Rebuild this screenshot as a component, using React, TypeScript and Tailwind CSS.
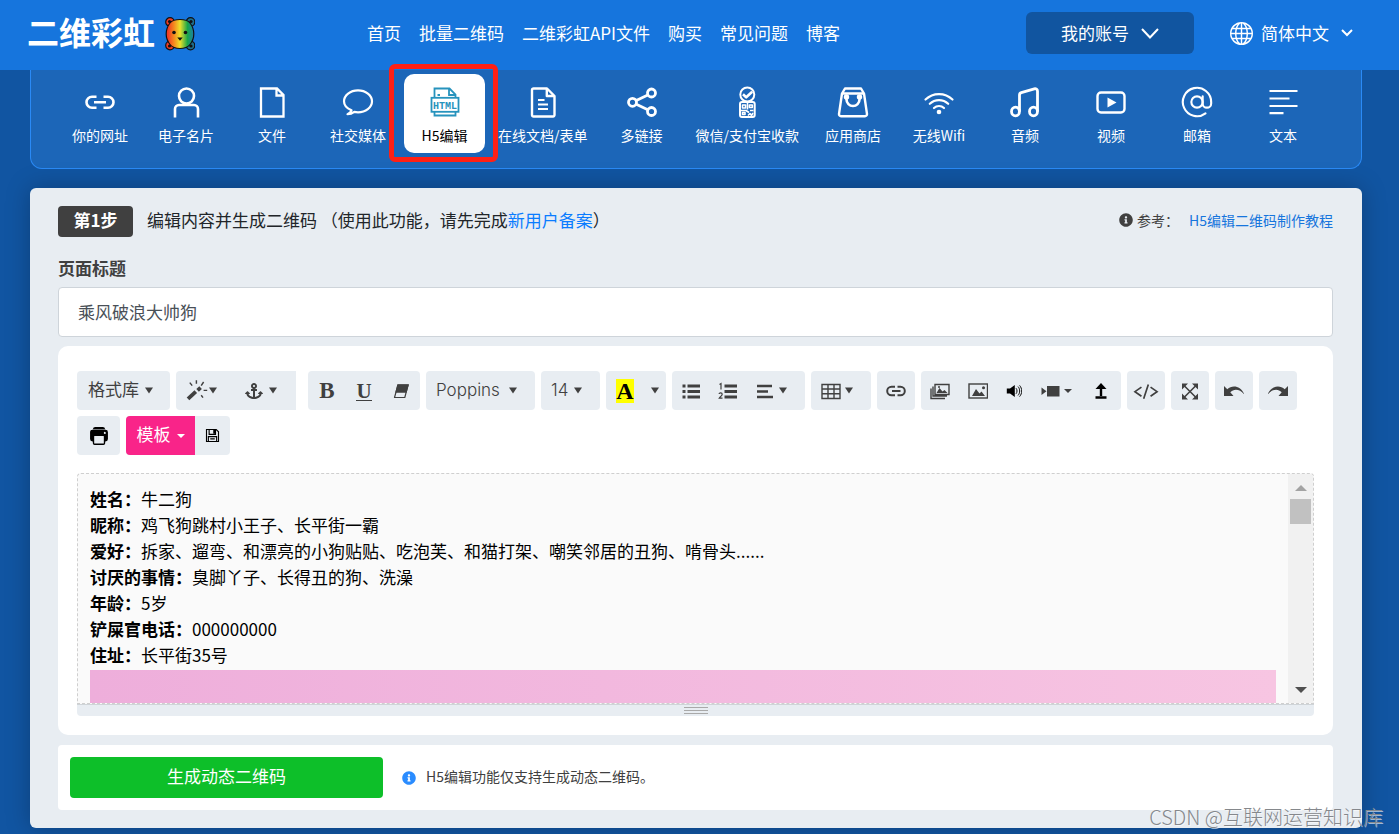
import type { ReactNode } from "react";
import { AtSign } from "lucide-react";
import { BsGlobe } from "react-icons/bs";
import { FaAnchor, FaInfoCircle } from "react-icons/fa";
import { IoPrint } from "react-icons/io5";

// ── Tab icons, 30×30 grid ────────────────────────────────────────────────────

function Line({ children, w = 2 }: { children: ReactNode; w?: number }) {
  return (
    <svg viewBox="0 0 30 30" className="h-[30px] w-[30px] overflow-visible" fill="none" stroke="currentColor" strokeWidth={w} strokeLinejoin="round">
      {children}
    </svg>
  );
}

const TABS: { label: string; icon: ReactNode; active?: boolean }[] = [
  {
    label: "你的网址",
    icon: (
      <Line w={2.6}>
        <path d="M11.5 9.8H7a5.5 5.5 0 0 0 0 11h4.5M18.5 9.8H23a5.5 5.5 0 0 1 0 11h-4.5M9 15.3h12" />
      </Line>
    ),
  },
  {
    label: "电子名片",
    icon: (
      <Line w={2.6}>
        <circle cx="15.5" cy="9" r="7.5" />
        <path d="M4 30.5v-8.5a4 4 0 0 1 4-4h15a4 4 0 0 1 4 4v8.5" />
      </Line>
    ),
  },
  {
    label: "文件",
    icon: (
      <Line w={2.3}>
        <path d="M4 1.5h16l6.500 6.5v21.5H4zM19.500 1.500v7h7" strokeLinejoin="miter" />
      </Line>
    ),
  },
  {
    label: "社交媒体",
    icon: (
      <Line w={2.2}>
        <path d="M8.500 23.300C4 21.500 1 18.300 1 14.300 1 8.200 7.300 3.300 15 3.300s14 4.900 14 11-6.300 11-14 11c-1.300 0-2.500-.1-3.700-.4-2 1.500-4.400 2.300-6.800 2.300 2-.9 3.500-2.300 4-3.900z" />
      </Line>
    ),
  },
  {
    label: "H5编辑",
    active: true,
    icon: (
      <svg viewBox="0 0 30 30" className="h-[30px] w-[30px] text-[#2793bd]" fill="none" stroke="currentColor" strokeWidth="1.800">
        <path d="M4.500 10.500V1.500h15l6 6v3M19 1.500V8h6.500M4.500 25v3.500h21V25M7.500 8h2.500" />
        <rect x="1.500" y="10.800" width="27" height="14" />
        <text x="15" y="21.500" textAnchor="middle" fill="currentColor" stroke="none" className="font-['Liberation_Mono'] text-[10px] font-bold">
          HTML
        </text>
      </svg>
    ),
  },
  {
    label: "在线文档/表单",
    icon: (
      <Line w={2.400}>
        <path d="M5.500 1.500h13.500l7.500 7.500v19a1.500 1.500 0 0 1-1.500 1.500H5.500A1.500 1.500 0 0 1 4 28V3a1.500 1.500 0 0 1 1.500-1.500zM18.800 2v7h7.200" />
        <path d="M10 13h6.500M10 17.500h10M10 22h10" strokeWidth="2" />
      </Line>
    ),
  },
  {
    label: "多链接",
    icon: (
      <Line w={2.800}>
        <circle cx="24.500" cy="6" r="4" />
        <circle cx="5.500" cy="15.300" r="4" />
        <circle cx="24.500" cy="24.500" r="4" />
        <path d="M9.300 13.500l11.500-5.600M9.300 17.200l11.500 5.500" />
      </Line>
    ),
  },
  {
    label: "微信/支付宝收款",
    icon: (
      <Line w={2}>
        <circle cx="15.300" cy="7.500" r="7" />
        <path d="M11 7.300l3.200 3 6-5.500" strokeWidth="2.600" />
        <rect x="8" y="15" width="14.700" height="15" rx="2" />
        <path d="M10.500 18h3v3h-3zM17.500 18h2.800v2.500h-2.800zM10.500 25.500h2.500v2h-2.500zM15.500 16v6.500M9 23.500h5l3 2M18 23.500h3.500M16 28.500l2-2 1.500 2 1.500-2.500" strokeWidth="1.600" />
      </Line>
    ),
  },
  {
    label: "应用商店",
    icon: (
      <Line w={2.400}>
        <path d="M4 6.500L7 1.500h16l3 5 3 20.500a2 2 0 0 1-2 2.200H3A2 2 0 0 1 1 27zM5 6.500h20" />
        <path d="M8.500 10.500v2a6.500 6.500 0 0 0 13 0v-2" strokeWidth="2.600" />
        <circle cx="8.500" cy="10" r="1.500" fill="currentColor" />
        <circle cx="21.500" cy="10" r="1.500" fill="currentColor" />
      </Line>
    ),
  },
  {
    label: "无线Wifi",
    icon: (
      <Line w={2.200}>
        <path d="M1.500 12.500a19.500 19.500 0 0 1 27 0M5.800 16.800a13.300 13.300 0 0 1 18.400 0M10 21a7.300 7.300 0 0 1 10 0" strokeLinecap="round" />
        <circle cx="15" cy="25" r="2.300" fill="currentColor" stroke="none" />
      </Line>
    ),
  },
  {
    label: "音频",
    icon: (
      <Line w={2.800}>
        <path d="M9.500 24.500V8a2.500 2.500 0 0 1 1.800-2.400l13-3.800a2.500 2.500 0 0 1 3.200 2.400v20.300" />
        <ellipse cx="5.500" cy="24.500" rx="4" ry="4.300" />
        <ellipse cx="23.500" cy="24.500" rx="4" ry="4.300" />
      </Line>
    ),
  },
  {
    label: "视频",
    icon: (
      <Line w={2.400}>
        <rect x="1.500" y="5.500" width="27" height="20" rx="3.500" />
        <path d="M11.500 10.500v10l9-5z" fill="currentColor" stroke="none" />
      </Line>
    ),
  },
  { label: "邮箱", icon: <AtSign size={34} strokeWidth={1.5} className="-m-0.5" /> },
  {
    label: "文本",
    icon: (
      <Line w={2.200}>
        <path d="M1.500 4h28M1.500 11.500h20M1.500 19h28M1.500 26.200h14" />
      </Line>
    ),
  },
];

// ── Editor content ───────────────────────────────────────────────────────────

const PROFILE = [
  ["姓名：", "牛二狗"],
  ["昵称：", "鸡飞狗跳村小王子、长平街一霸"],
  ["爱好：", "拆家、遛弯、和漂亮的小狗贴贴、吃泡芙、和猫打架、嘲笑邻居的丑狗、啃骨头......"],
  ["讨厌的事情：", "臭脚丫子、长得丑的狗、洗澡"],
  ["年龄：", "5岁"],
  ["铲屎官电话：", "000000000"],
  ["住址：", "长平街35号"],
];

const NAV = ["首页", "批量二维码", "二维彩虹API文件", "购买", "常见问题", "博客"];

// ── Small pieces ─────────────────────────────────────────────────────────────

function Caret() {
  return (
    <svg viewBox="0 0 8 7" className="h-[7px] w-2 shrink-0" fill="currentColor">
      <path d="M0 .5h8L4 6.500z" />
    </svg>
  );
}

function FlatCaret() {
  return (
    <svg viewBox="0 0 8 4" className="h-1 w-2 shrink-0" fill="currentColor">
      <path d="M0 0h8L4 4z" />
    </svg>
  );
}

function Group({ children, className = "" }: { children: ReactNode; className?: string }) {
  return <div className={`flex h-[39px] overflow-hidden rounded bg-[#e8edf2] text-[#404040] ${className}`}>{children}</div>;
}

function Tool({ label, children, className = "w-[38px]" }: { label: string; children: ReactNode; className?: string }) {
  return (
    <button type="button" aria-label={label} className={`flex items-center justify-center ${className}`}>
      {children}
    </button>
  );
}

function Glyph({ children, className = "h-5 w-5" }: { children: ReactNode; className?: string }) {
  return (
    <svg viewBox="0 0 20 20" className={`shrink-0 ${className}`} fill="none" stroke="currentColor" strokeWidth="1.600">
      {children}
    </svg>
  );
}

function Bear() {
  return (
    <svg viewBox="0 0 30 34" className="h-[34px] w-[30px]" stroke="#111" strokeWidth="1.200">
      <defs>
        <linearGradient id="rainbow" x1="0" y1="0" x2="30" y2="0" gradientUnits="userSpaceOnUse">
          <stop offset=".1" stopColor="#ef3b24" />
          <stop offset=".3" stopColor="#f58a1f" />
          <stop offset=".5" stopColor="#ece02a" />
          <stop offset=".75" stopColor="#1aa64a" />
          <stop offset="1" stopColor="#1c75bc" />
        </linearGradient>
      </defs>
      <circle cx="5" cy="5" r="4.300" fill="#ef3b24" />
      <circle cx="25.500" cy="5" r="4.300" fill="#1d6f8f" />
      <circle cx="5" cy="28.500" r="4.300" fill="#ef3b24" />
      <circle cx="25.500" cy="28.500" r="4.300" fill="#1d6f8f" />
      <path d="M15 2.500c4 0 8 1 10 3.500s3.800 7 3.800 11-1.800 8-3.800 10.500-6 4-10 4-8-1.500-10-4S1.200 21 1.200 17 3 8.500 5 6s6-3.500 10-3.500z" fill="url(#rainbow)" />
      <g fill="#111" stroke="none">
        <circle cx="9" cy="15.500" r="1.800" />
        <circle cx="20.500" cy="15.500" r="1.800" />
        <path d="M12.300 20.500h5.400L15 23.800z" />
        <circle cx="4.500" cy="4.500" r="1.600" />
        <circle cx="26" cy="4.500" r="1.600" />
        <circle cx="4.500" cy="29" r="1.600" />
        <circle cx="26" cy="29" r="1.600" />
      </g>
    </svg>
  );
}

function Header() {
  return (
    <header className="flex h-[70px] items-center bg-[#1675dd] pl-[27px] pr-[46px] text-[17px] text-white">
      <a href="#" className="flex items-center gap-2.5 pb-0.5 text-[32px] font-bold leading-none">
        <span className="pb-1.5">二维彩虹</span>
        <Bear />
      </a>
      <nav className="ml-[172px] flex gap-[18px] pb-1">
        {NAV.map((n) => (
          <a key={n} href="#">
            {n}
          </a>
        ))}
      </nav>
      <div className="ml-auto flex items-center gap-9 pb-1">
        <button type="button" className="flex h-[42px] w-[168px] items-center justify-center gap-3 rounded-md bg-[#1155a0]">
          我的账号
          <svg viewBox="0 0 18 11" className="h-[11px] w-[18px]" fill="none" stroke="currentColor" strokeWidth="2">
            <path d="M1 1l8 8.500L17 1" />
          </svg>
        </button>
        <div className="flex items-center gap-2">
          <BsGlobe size={23} />
          <select aria-label="语言" className="mr-1 appearance-none bg-transparent text-[17px]">
            <option>简体中文</option>
          </select>
          <svg viewBox="0 0 12 8" className="h-2 w-3" fill="none" stroke="currentColor" strokeWidth="2">
            <path d="M1 1l5 5 5-5" />
          </svg>
        </div>
      </div>
    </header>
  );
}

function Tabs() {
  return (
    <nav className="flex rounded-b-xl border border-t-0 border-[#2a8af6] bg-[#1c66b8] pb-[15px] pl-[26px] pr-[35px] pt-1 text-sm text-white">
      {TABS.map((t) => (
        <a
          key={t.label}
          href="#"
          className={
            t.active
              ? "relative z-10 ml-[3px] mr-0.5 flex w-[81px] shrink-0 flex-col items-center gap-[7px] rounded-[10px] bg-white pb-[7px] pt-[13px] text-black"
              : "flex min-w-[86px] shrink-0 grow flex-col items-center gap-[7px] px-2.5 pb-[7px] pt-[13px]"
          }
        >
          {t.icon}
          <span className="whitespace-nowrap leading-[22px]">{t.label}</span>
          {t.active && <span className="absolute -bottom-[9px] -left-[15px] -right-[13px] -top-2.5 rounded-md border-[5px] border-[#ff2015]" />}
        </a>
      ))}
    </nav>
  );
}

function Toolbar() {
  return (
    <div className="flex flex-wrap gap-1.5 text-[17px]">
      <Group>
        <Tool label="格式库" className="w-[93px] gap-1.5 pr-1.5">
          <span className="pb-1">格式库</span> <Caret />
        </Tool>
      </Group>
      <Group className="mr-1.5 rounded-r-none">
        <Tool label="魔法棒" className="w-[50px]">
          <Glyph className="h-6 w-6">
            <path d="M2.500 16.500l6.500-6" strokeWidth="3.200" />
            <path d="M10.500 9.500l2.500-2.300" strokeWidth="3.200" />
            <path d="M4 3l2 2.500M9.500 1v3M15.500 2.500l-2 3M15.500 9.500h3M13.500 13.500l1.500 2" strokeWidth="1.200" />
          </Glyph>
          <Caret />
        </Tool>
        <Tool label="锚点" className="w-[70px] gap-1.5">
          <FaAnchor size={18} />
          <Caret />
        </Tool>
      </Group>
      <Group className="font-['Liberation_Serif'] text-[23px] font-bold">
        <Tool label="粗体" className="w-[38px] pt-0.5">
          B
        </Tool>
        <Tool label="下划线" className="w-9 pt-0.5">
          <span className="border-b border-current text-[21px] leading-[18px]">U</span>
        </Tool>
        <Tool label="清除格式">
          <Glyph>
            <path d="M7 4h10l-3.200 12.500H3.500z" strokeWidth="1.200" strokeLinejoin="round" />
            <path d="M7 4h10l-2 7H5.200z" fill="currentColor" />
          </Glyph>
        </Tool>
      </Group>
      <Group className="relative font-['Inter',sans-serif] font-light">
        <select aria-label="字体" className="w-[109px] appearance-none bg-transparent pl-2.5">
          <option>Poppins</option>
        </select>
        <span className="pointer-events-none absolute right-[18px] top-4">
          <Caret />
        </span>
      </Group>
      <Group className="relative font-['Inter',sans-serif] font-light">
        <select aria-label="字号" className="w-[59px] appearance-none bg-transparent pl-2.5">
          <option>14</option>
        </select>
        <span className="pointer-events-none absolute right-[18px] top-4">
          <Caret />
        </span>
      </Group>
      <Group>
        <Tool label="文字颜色">
          <span className="bg-[#ffff00] font-['Liberation_Serif'] text-2xl font-bold leading-6 text-black">A</span>
        </Tool>
        <Tool label="更多颜色" className="w-[22px]">
          <Caret />
        </Tool>
      </Group>
      <Group>
        <Tool label="无序列表">
          <Glyph>
            <path d="M1.500 5h3M1.500 10.500h3M1.500 16h3M6.500 5H19M6.500 10.500H19M6.500 16H19" strokeWidth="2.800" />
          </Glyph>
        </Tool>
        <Tool label="有序列表" className="w-9">
          <Glyph>
            <path d="M6.500 5H19M6.500 10.500H19M6.500 16H19" strokeWidth="2.800" />
            <path d="M1.500 3.500l1.500-1v6M1 13c.3-1.600 3.200-1.600 3.200.2 0 1.300-2 2.300-3 4h3.300" strokeWidth="1.200" />
          </Glyph>
        </Tool>
        <Tool label="段落" className="w-[59px] gap-1 pr-2.5">
          <Glyph>
            <path d="M2 5h15M2 10.500h11M2 16h16" strokeWidth="2.600" />
          </Glyph>
          <Caret />
        </Tool>
      </Group>
      <Group>
        <Tool label="表格" className="w-[60px] gap-1 pr-2">
          <Glyph>
            <path d="M1 3.500h18v14H1zM1 8h18M1 12.700h18M7 3.500v14M13 3.500v14" strokeWidth="1.400" />
          </Glyph>
          <Caret />
        </Tool>
      </Group>
      <Group>
        <Tool label="链接">
          <Glyph>
            <path d="M9 5.700H5.500a4.300 4.300 0 0 0 0 8.600H9M11.500 5.700h3a4.300 4.300 0 0 1 0 8.600h-3M6 10h8.500" strokeWidth="2" />
          </Glyph>
        </Tool>
      </Group>
      <Group>
        <Tool label="图集">
          <Glyph>
            <path d="M5 3.500h14v10H5zM3 5.500v9.500h14M1 7.500V17.500h14" strokeWidth="1.400" />
            <path d="M6.500 12l3-5 3 3.500 2-1.500 3 3z" fill="currentColor" stroke="none" />
            <circle cx="9" cy="6" r="1" fill="currentColor" stroke="none" />
          </Glyph>
        </Tool>
        <Tool label="图片">
          <Glyph>
            <rect x="1" y="3" width="18.500" height="14" strokeWidth="1.400" />
            <path d="M4 15l4-7 3.500 4.500 2-2L17 15z" fill="currentColor" stroke="none" />
            <circle cx="15.500" cy="6.800" r="1.500" fill="currentColor" stroke="none" />
          </Glyph>
        </Tool>
        <Tool label="音频" className="w-[34px] text-black">
          <Glyph className="h-4 w-4">
            <path d="M1 7h4l6-4.500v15L5 13H1z" fill="currentColor" stroke="none" />
            <path d="M12.500 6.500c1.700 2 1.700 5 0 7M15 4.500c2.800 3 2.800 8 0 11M17 3c3.500 4 3.500 10 0 14" strokeWidth="1.200" />
          </Glyph>
        </Tool>
        <Tool label="视频" className="w-[50px] gap-1">
          <Glyph>
            <path d="M1.500 6.500l5 3.800-5 3.800zM7 5h12.500v10.500H7z" fill="currentColor" stroke="none" />
          </Glyph>
          <FlatCaret />
        </Tool>
        <Tool label="上传" className="w-10 text-black">
          <Glyph>
            <path d="M10 15V6.500M4.500 16.500h11" strokeWidth="2.400" />
            <path d="M10 2l5.500 6h-11z" fill="currentColor" stroke="none" />
          </Glyph>
        </Tool>
      </Group>
      <Group>
        <Tool label="源代码">
          <Glyph className="h-[26px] w-[26px]">
            <path d="M6.500 7l-5 3.500 5 3.500M13.500 7l5 3.500-5 3.500M11.800 5L8.200 16" strokeWidth="1.300" />
          </Glyph>
        </Tool>
      </Group>
      <Group>
        <Tool label="全屏">
          <Glyph>
            <path d="M4.500 5l11 11M15.500 5l-11 11" strokeWidth="1.600" />
            <path d="M2 2.500h6l-6 6zM18 2.500h-6l6 6zM2 18.500h6l-6-6zM18 18.500h-6l6-6z" fill="currentColor" stroke="none" />
          </Glyph>
        </Tool>
      </Group>
      <Group>
        <Tool label="撤销">
          <Glyph>
            <path d="M0 5v10h9.500L6.300 11.300C10 7.300 16 8 20.300 13.500 17 5 8.500 3.500 3.300 8.300z" fill="currentColor" stroke="none" />
          </Glyph>
        </Tool>
      </Group>
      <Group>
        <Tool label="重做">
          <Glyph>
            <path d="M20 5v10h-9.500l3.200-3.700C10 7.300 4 8 -.3 13.500 3 5 11.500 3.500 16.700 8.300z" fill="currentColor" stroke="none" />
          </Glyph>
        </Tool>
      </Group>
      <Group>
        <Tool label="打印" className="w-[43px] text-black">
          <IoPrint size={22} />
        </Tool>
      </Group>
      <Group>
        <Tool label="模板" className="w-[69px] gap-1.5 bg-[#f92489] text-white">
          <span className="pb-1">模板</span> <FlatCaret />
        </Tool>
        <Tool label="保存" className="w-[35px] text-black">
          <Glyph className="h-[15px] w-[15px]">
            <path d="M2 2h13l3 3v13H2zM5.500 2v6.500h8.500V2M4.500 18v-6.500h11V18M7 14.500h6" strokeWidth="1.500" />
            <path d="M11 2.500h2.500v5H11z" fill="currentColor" stroke="none" />
          </Glyph>
        </Tool>
      </Group>
    </div>
  );
}

function Editor() {
  return (
    <div className="mt-[18px]">
      <div className="flex h-[231px] overflow-hidden rounded-t border border-dashed border-[#cfcfcf] bg-[#fafafa]">
        <div
          role="textbox"
          aria-label="正文"
          contentEditable
          suppressContentEditableWarning
          className="flex-1 overflow-hidden px-3 pt-3 text-[17px] leading-[26px] text-black"
        >
          {PROFILE.map(([k, v]) => (
            <p key={k}>
              <b>{k}</b>
              {v}
            </p>
          ))}
          <div className="mt-0.5 h-40 bg-linear-to-r from-[#eeaedb] to-[#f7c5e2]" />
        </div>
        {/* Scroll bar */}
        <div className="flex w-[25px] flex-col items-center bg-[#f1f1f1]">
          <svg viewBox="0 0 12 6" className="mb-2 mt-[11px] h-1.5 w-3" fill="#a3a3a3">
            <path d="M0 6h12L6 0z" />
          </svg>
          <div className="h-[25px] w-[21px] bg-[#c1c1c1]" />
          <svg viewBox="0 0 12 6" className="mb-2.5 mt-auto h-1.5 w-3" fill="#505050">
            <path d="M0 0h12L6 6z" />
          </svg>
        </div>
      </div>
      <div className="flex h-3 flex-col items-center justify-center gap-px rounded-b border-t border-[#cfd4d8] bg-[#e8edf2]">
        <span className="h-px w-6 bg-[#a9a9a9]" />
        <span className="my-px h-px w-6 bg-[#a9a9a9]" />
        <span className="h-px w-6 bg-[#a9a9a9]" />
      </div>
    </div>
  );
}

export default function App() {
  return (
    <div className="relative min-h-screen overflow-hidden bg-[#1155a2] pb-1.5 font-['Noto_Sans_CJK_SC',sans-serif]">
      <Header />
      <div className="pl-[30px] pr-[37px]">
        <Tabs />
        <main className="mt-[19px] rounded-md bg-[#e8edf2] pb-[18px] pl-7 pr-[29px] pt-[18px] text-[#404040] shadow-[0_0_24px_rgba(0,0,0,0.25)]">
          <div className="flex h-[31px] items-center">
            <span className="flex h-[31px] w-[75px] items-center justify-center rounded bg-[#404040] pb-1 text-[17px] font-bold text-white">第1步</span>
            <p className="ml-3.5 pb-1 text-[17px] text-[#212529]">
              编辑内容并生成二维码 （使用此功能，请先完成
              <a href="#" className="text-[#0a7cff]">
                新用户备案
              </a>
              ）
            </p>
            <p className="ml-auto flex items-center pb-1 text-sm">
              <FaInfoCircle size={14} className="mr-1" />
              参考：
              <a href="#" className="ml-2.5 text-[#1675dd]">
                H5编辑二维码制作教程
              </a>
            </p>
          </div>

          <label htmlFor="title" className="mb-1.5 mt-[18px] block text-[17px] font-bold leading-[26px]">
            页面标题
          </label>
          <input
            id="title"
            type="text"
            defaultValue="乘风破浪大帅狗"
            className="block h-[50px] w-full rounded border border-[#ced4da] bg-white px-[19px] pb-0.5 text-[17px] text-[#495057]"
          />

          <section className="mt-[9px] rounded-[10px] bg-white px-[19px] pb-[19px] pt-[25px]">
            <Toolbar />
            <Editor />
          </section>

          <section className="mt-2.5 flex items-center rounded bg-white p-3">
            <button type="button" className="h-[41px] w-[313px] rounded bg-[#0dbf29] pb-1 text-[17px] text-white">
              生成动态二维码
            </button>
            <FaInfoCircle size={14} className="ml-[19px] mr-2.5 text-[#2a8cff]" />
            <span className="pb-1 text-sm">H5编辑功能仅支持生成动态二维码。</span>
          </section>
        </main>
      </div>
      <p className="absolute bottom-0.5 right-4 text-xl leading-[30px] font-light text-[#85888c] [text-shadow:1px_1px_0_rgba(255,255,255,0.6)]">
        CSDN @互联网运营知识库
      </p>
    </div>
  );
}
